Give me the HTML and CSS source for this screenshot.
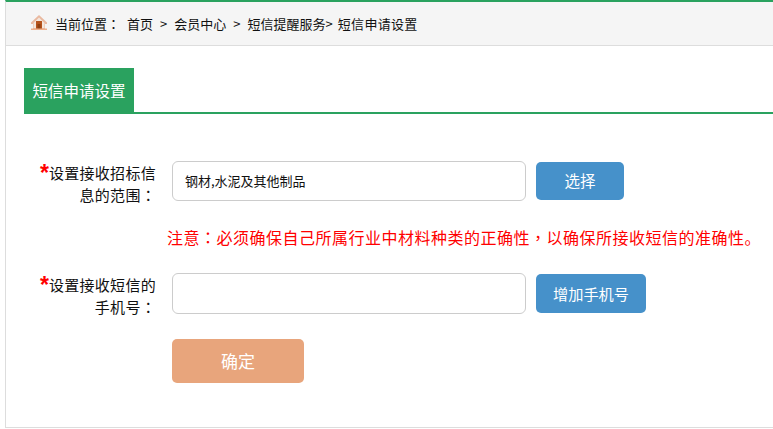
FILE: index.html
```html
<!DOCTYPE html>
<html lang="zh-CN">
<head>
<meta charset="utf-8">
<title>短信申请设置</title>
<link rel="stylesheet" href="styles.css">
</head>
<body>
<div class="page">
  <div class="crumbs">
    <svg class="home" width="18" height="16" viewBox="0 0 18 16"><path d="M9 1 L17 8.5 V10 H15 V15 H3 V10 H1 V8.5 Z" fill="#e9b9a0"/><path d="M9 3.5 L14.5 9 V14 H3.5 V9 Z" fill="#f3e6dc"/><rect x="6" y="7" width="6" height="8" fill="#b5531c"/><rect x="7.5" y="10" width="3" height="5" fill="#8f3f10"/><rect x="1" y="14.5" width="16" height="1.5" fill="#eeb08c"/></svg>
    <span class="here">当前位置<span class="p" lang="zh-TW">：</span></span>
    <span class="link">首页</span>
    <span class="sep">&gt;</span>
    <span class="link">会员中心</span>
    <span class="sep">&gt;</span>
    <span class="link">短信提醒服务&gt;</span>
    <span class="link last">短信申请设置</span>
  </div>
  <div class="tabs"><div class="tab">短信申请设置</div></div>
  <div class="row first">
    <div class="label"><div><i>*</i>设置接收招标信</div><div>息的范围<span class="p" lang="zh-TW">：</span></div></div>
    <div class="input">钢材,水泥及其他制品</div>
    <div class="btn pick">选择</div>
  </div>
  <div class="notice">注意<span class="p" lang="zh-TW">：</span>必须确保自己所属行业中材料种类的正确性<span class="p" lang="zh-TW">，</span>以确保所接收短信的准确性。</div>
  <div class="row second">
    <div class="label"><div><i>*</i>设置接收短信的</div><div>手机号<span class="p" lang="zh-TW">：</span></div></div>
    <div class="input"></div>
    <div class="btn add">增加手机号</div>
  </div>
  <div class="submit">确定</div>
</div>
</body>
</html>
```

FILE: styles.css
```css
* { box-sizing: border-box; }
html, body { margin: 0; padding: 0; background: #fff; overflow: hidden; }
body { font-family: "Noto Sans CJK SC", "Liberation Sans", sans-serif; color: #111; }
.p { font-family: "Noto Sans CJK TC", sans-serif; }
.page {
  margin-left: 5px;
  width: 800px;
  height: 428px;
  border-left: 1px solid #ddd;
  border-bottom: 1px solid #ddd;
  border-top: 2px solid #2aa25f;
}
.crumbs {
  height: 44px;
  background: #f5f5f5;
  border-bottom: 1px solid #ddd;
  display: flex;
  align-items: center;
  padding-left: 24px;
  font-size: 13px;
}
.home { margin-right: 7px; margin-top: -4px; }
.here { margin-right: 7px; }
.sep { margin: 0 7px; }
.link + .link { margin-left: 5px; }
.last { letter-spacing: .33px; }
.tabs {
  margin: 22px 0 0 18px;
  height: 46px;
  border-bottom: 2px solid #2aa25f;
}
.tab {
  width: 110px;
  height: 46px;
  background: #2aa25f;
  color: #fff;
  font-size: 15.5px;
  line-height: 45px;
  text-align: center;
}
.row { display: flex; align-items: flex-start; }
.row.first { margin-top: 47px; }
.row.second { margin-top: 24px; }
.label {
  margin-left: 30px;
  width: 120px;
  padding-top: 1px;
  font-size: 15px;
  letter-spacing: .3px;
  line-height: 22px;
  text-align: right;
  flex: none;
}
.label i {
  color: #f00;
  font-style: normal;
  font-family: "Liberation Sans", sans-serif;
  font-weight: bold;
  font-size: 23px;
  line-height: 16px;
  vertical-align: -2px;
  letter-spacing: 0;
}
.input {
  margin-left: 16px;
  width: 354px;
  height: 40px;
  border: 1px solid #ccc;
  border-radius: 6px;
  background: #fff;
  font-size: 13px;
  line-height: 37px;
  padding-left: 12px;
  flex: none;
}
.second .input { height: 41px; }
.btn {
  margin: 1px 0 0 10px;
  background: #4691ca;
  color: #fff;
  border-radius: 5px;
  text-align: center;
  font-size: 15.5px;
  flex: none;
}
.pick { width: 88px; height: 38px; line-height: 37px; }
.add { width: 110px; height: 39px; line-height: 38px; font-size: 15.2px; }
.notice {
  margin: 19px 0 0 161px;
  height: 24px;
  color: #f00;
  font-size: 16px;
  letter-spacing: .5px;
  line-height: 24px;
  white-space: nowrap;
}
.submit {
  margin: 21px 0 0 166px;
  width: 132px;
  height: 44px;
  border-radius: 5px;
  background: #e8a57c;
  color: #fff;
  font-size: 17px;
  line-height: 43px;
  text-align: center;
}
```
